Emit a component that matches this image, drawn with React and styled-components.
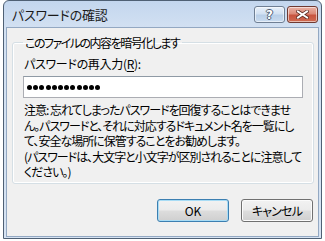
import React from 'react';
import styled, { createGlobalStyle } from 'styled-components';

const GlobalStyle = createGlobalStyle`
  html, body {
    margin: 0;
    padding: 0;
    background: #ffffff;
  }
  body {
    font-family: "Noto Sans CJK JP", "Noto Sans", sans-serif;
    font-feature-settings: "palt";
    color: #000;
  }
`;

const Window = styled.div`
  box-sizing: border-box;
  margin-left: 3px;
  width: 319px;
  height: 239px;
  border: 1px solid #4f6074;
  border-radius: 6px 6px 0 0;
  background: linear-gradient(180deg, #c3d6ee 0%, #d3e1f2 12%, #d6e3f3 100%);
  padding: 0 2px 1px 2px;
  display: flex;
  flex-direction: column;
`;

const TitleBar = styled.div`
  height: 26px;
  display: flex;
  align-items: flex-start;
  padding: 0 1px 0 6px;
  box-sizing: border-box;
`;

const Title = styled.div`
  flex: 1;
  font-size: 13px;
  line-height: 16px;
  margin-top: 6px;
  letter-spacing: -0.2px;
  color: #1a1a1a;
`;

const CaptionButton = styled.div`
  box-sizing: border-box;
  width: 31px;
  height: 17px;
  margin-top: 5px;
  margin-left: ${p => (p.close ? '2px' : '0')};
  border: 1px solid ${p => (p.close ? '#6f3a32' : '#6f7f94')};
  border-radius: 3px;
  display: flex;
  align-items: center;
  justify-content: center;
  box-shadow: inset 0 0 0 1px rgba(255, 255, 255, 0.55);
  background: ${p =>
    p.close
      ? 'linear-gradient(180deg, #eab3a6 0%, #dc8a78 45%, #c8543f 55%, #cf6a50 100%)'
      : 'linear-gradient(180deg, #e9f1fb 0%, #d2e1f2 45%, #b9cfe8 55%, #c9dbef 100%)'};
`;

const HelpGlyph = styled.span`
  font-family: "DejaVu Sans", sans-serif;
  font-size: 12px;
  font-weight: bold;
  line-height: 12px;
  color: #ffffff;
  text-shadow: -1px 0 #4f5f74, 1px 0 #4f5f74, 0 -1px #4f5f74, 0 1px #4f5f74;
`;

const Client = styled.div`
  flex: 1;
  box-sizing: border-box;
  background: #f0f0f0;
  border: 1px solid #93a8c2;
  padding: 7px 4px 0 5px;
  display: flex;
  flex-direction: column;
`;

const Group = styled.fieldset`
  margin: 0;
  padding: 6px 10px 3px 10px;
  border: 1px solid #d5dfe5;
  border-radius: 3px;
  box-shadow: inset 0 0 0 1px #ffffff;
`;

const Legend = styled.legend`
  font-size: 12px;
  line-height: 15px;
  letter-spacing: -1.5px;
  padding: 0 3px 0 2px;
  margin-left: 0;
`;

const Label = styled.div`
  font-size: 12px;
  line-height: 15px;
  letter-spacing: -0.3px;
  margin: 0 0 0 1px;

  u {
    text-decoration-thickness: 1px;
    text-underline-offset: 2px;
  }
`;

const Field = styled.div`
  box-sizing: border-box;
  margin-top: 5px;
  width: 280px;
  height: 22px;
  background: #ffffff;
  border: 1px solid #abadb3;
  border-top-color: #8f9aa5;
  display: flex;
  align-items: center;
  padding-left: 3px;
`;

const Dot = styled.span`
  width: 5px;
  height: 5px;
  border-radius: 50%;
  background: #000;
  margin-right: 1.2px;
`;

const Note = styled.p`
  margin: 4px 0 0 1px;
  font-size: 12px;
  line-height: 15.5px;
  letter-spacing: -1px;
  white-space: nowrap;
`;

const ButtonRow = styled.div`
  display: flex;
  justify-content: flex-end;
  gap: 12px;
  padding-right: 1px;
  margin-top: 15px;
`;

const Button = styled.button`
  box-sizing: border-box;
  width: 72px;
  height: 23px;
  font-family: inherit;
  font-feature-settings: "palt";
  font-size: 12px;
  letter-spacing: ${p => (p.primary ? '0' : '-0.8px')};
  color: #000;
  border-radius: 3px;
  border: 1px solid ${p => (p.primary ? '#3c7fb1' : '#707070')};
  background: linear-gradient(180deg, #f2f2f2 0%, #ebebeb 48%, #dddddd 52%, #cfcfcf 100%);
  box-shadow: inset 0 0 0 1px ${p => (p.primary ? '#a8dcf5' : '#fbfbfb')};
  padding: 0;
`;

const CloseIcon = () => (
  <svg width="13" height="9" viewBox="0 0 13 9">
    <path d="M2 1.5 L11 7.5 M11 1.5 L2 7.5" stroke="#5a2a22" strokeWidth="3.6" strokeLinecap="square" />
    <path d="M2 1.5 L11 7.5 M11 1.5 L2 7.5" stroke="#ffffff" strokeWidth="2" strokeLinecap="square" />
  </svg>
);

export default function App() {
  return (
    <>
      <GlobalStyle />
      <Window>
        <TitleBar>
          <Title>パスワードの確認</Title>
          <CaptionButton>
            <HelpGlyph>?</HelpGlyph>
          </CaptionButton>
          <CaptionButton close>
            <CloseIcon />
          </CaptionButton>
        </TitleBar>
        <Client>
          <Group>
            <Legend>このファイルの内容を暗号化します</Legend>
            <Label>
              パスワードの再入力(<u>R</u>):
            </Label>
            <Field>
              {Array.from({ length: 12 }).map((_, i) => (
                <Dot key={i} />
              ))}
            </Field>
            <Note>
              注意: 忘れてしまったパスワードを回復することはできませ
              <br />
              ん。パスワードと、それに対応するドキュメント名を一覧にし
              <br />
              て、安全な場所に保管することをお勧めします。
              <br />
              (パスワードは、大文字と小文字が区別されることに注意して
              <br />
              ください。)
            </Note>
          </Group>
          <ButtonRow>
            <Button primary>OK</Button>
            <Button>キャンセル</Button>
          </ButtonRow>
        </Client>
      </Window>
    </>
  );
}
